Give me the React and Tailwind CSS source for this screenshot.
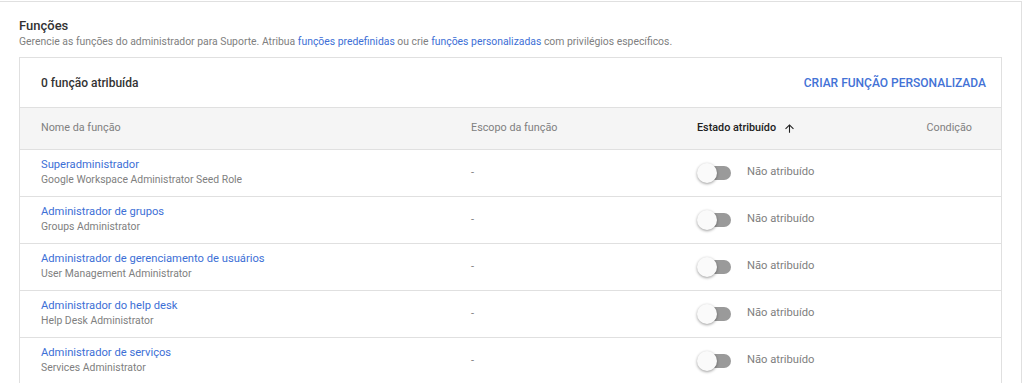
import React from "react";

const ROLES = [
  { name: "Superadministrador", sub: "Google Workspace Administrator Seed Role" },
  { name: "Administrador de grupos", sub: "Groups Administrator" },
  { name: "Administrador de gerenciamento de usuários", sub: "User Management Administrator" },
  { name: "Administrador do help desk", sub: "Help Desk Administrator" },
  { name: "Administrador de serviços", sub: "Services Administrator" },
];

const Toggle = () => (
  <div className="relative h-[20px] w-[34px] shrink-0">
    <div className="absolute left-[3px] top-[3px] h-[14px] w-[31px] rounded-full bg-[#9a9a9a]" />
    <div className="absolute left-0 top-0 h-[20px] w-[20px] rounded-full bg-[#fafafa] shadow-[0_1px_3px_rgba(0,0,0,0.4)]" />
  </div>
);

const ArrowUp = () => (
  <svg width="13" height="13" viewBox="0 0 24 24" className="fill-[#212121]">
    <path d="M4 12l1.41 1.41L11 7.83V20h2V7.83l5.58 5.59L20 12l-8-8-8 8z" />
  </svg>
);

export default function App() {
  return (
    <div className="h-[383px] overflow-hidden bg-white pt-px font-['Roboto',sans-serif]">
      <div className="w-[1022px] border-t border-r border-[#e0e0e0] pl-[19px] pr-[19px] pt-[15px]">
        {/* heading */}
        <h2 className="text-[13px] font-medium leading-[18px] text-[#333333]">Funções</h2>
        <p className="text-[10.4px] leading-[14px] text-[#808080]">
          Gerencie as funções do administrador para Suporte. Atribua{" "}
          <a className="text-[#3d6fd6]">funções predefinidas</a> ou crie{" "}
          <a className="text-[#3d6fd6]">funções personalizadas</a> com privilégios específicos.
        </p>

        {/* table */}
        <div className="mt-[8px] border border-[#e0e0e0]">
          <div className="flex h-[49px] items-center justify-between pl-[21px] pr-[15px]">
            <span className="text-[12px] font-medium text-[#333333]">0 função atribuída</span>
            <span className="text-[12px] font-medium text-[#4372d6]">CRIAR FUNÇÃO PERSONALIZADA</span>
          </div>

          <div className="grid h-[43px] grid-cols-[430px_226px_1fr] items-center border-y border-[#e0e0e0] bg-[#f5f5f5] pl-[21px] pr-[29px] text-[10.8px]">
            <span className="text-[#808080]">Nome da função</span>
            <span className="text-[#808080]">Escopo da função</span>
            <div className="flex items-center justify-between">
              <span className="flex items-center gap-[7px] font-medium text-[#212121]">
                Estado atribuído
                <ArrowUp />
              </span>
              <span className="text-[#808080]">Condição</span>
            </div>
          </div>

          {ROLES.map((r) => (
            <div
              key={r.name}
              className="grid h-[47px] grid-cols-[430px_226px_1fr] items-center border-b border-[#e0e0e0] pl-[21px] pr-[29px]"
            >
              <div className="-mt-[2px] flex flex-col">
                <span className="text-[11.2px] leading-[15px] text-[#3d6fd6]">{r.name}</span>
                <span className="text-[10.4px] leading-[15px] text-[#808080]">{r.sub}</span>
              </div>
              <span className="text-[11px] text-[#808080]">-</span>
              <div className="flex items-center gap-[16px]">
                <Toggle />
                <span className="-mt-[2px] text-[11.2px] text-[#808080]">Não atribuído</span>
              </div>
            </div>
          ))}
        </div>
      </div>
    </div>
  );
}
